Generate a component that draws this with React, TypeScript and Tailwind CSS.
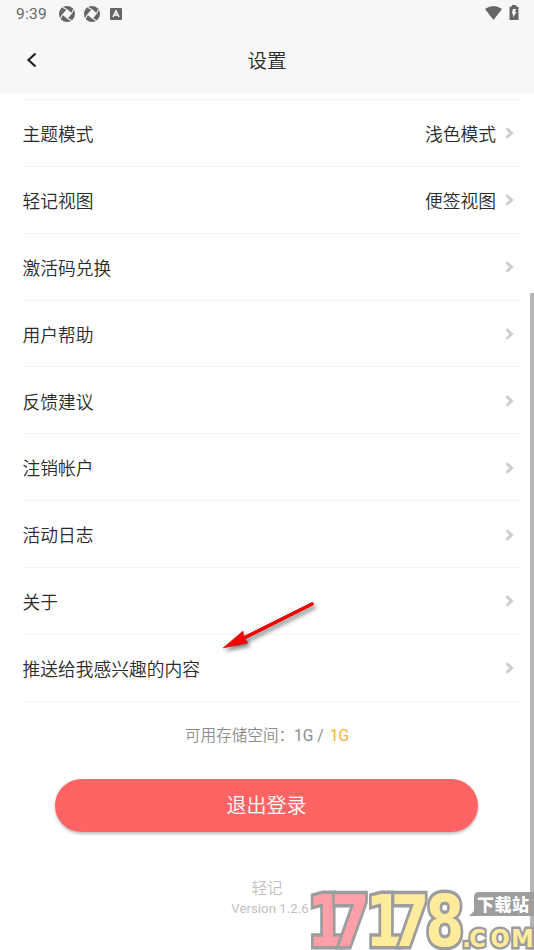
const rows = [
  { label: "主题模式", value: "浅色模式" },
  { label: "轻记视图", value: "便签视图" },
  { label: "激活码兑换" },
  { label: "用户帮助" },
  { label: "反馈建议" },
  { label: "注销帐户" },
  { label: "活动日志" },
  { label: "关于" },
  { label: "推送给我感兴趣的内容" },
];

function Shutter() {
  return (
    <svg width="16" height="16" viewBox="0 0 16 16">
      <circle cx="8" cy="8" r="8" fill="#666" />
      <path d="m8 3 5 4.500L8.500 13 3 8.500z" fill="#f7f7f7" />
      <path d="M8 3.500 4 1.500M12.500 7.500l2-4M8.500 12.500l4 2M3.500 8.500l-2 4" stroke="#f7f7f7" strokeWidth="1.100" />
    </svg>
  );
}

function StatusBar() {
  return (
    <div className="flex h-[27px] items-center pl-[16px] pr-[15px] text-[#666]">
      <span className="w-[43px] pt-[2px] text-[15.5px] leading-none tracking-[0.3px]">9:39</span>
      <div className="flex items-center gap-[9px]">
        <Shutter />
        <Shutter />
      </div>
      <svg className="ml-[10px]" width="12" height="12" viewBox="0 0 12 12">
        <rect width="12" height="12" rx="1" fill="#666" />
        <path d="m3 9 3-6 3 6M4.200 7h3.600" fill="none" stroke="#f7f7f7" strokeWidth="1.600" />
      </svg>
      <svg className="-mt-px ml-auto" width="17" height="14" viewBox="0 0 17 14">
        <path d="M0 3Q8.500-3 17 3L8.500 14z" fill="#666" />
      </svg>
      <svg className="-mt-[2px] ml-[7px]" width="10" height="15" viewBox="0 0 10 15">
        <path d="M3 0h4v1.500h1.500q1 0 1 1V15H.5V2.500q0-1 1-1H3z" fill="#666" />
        <path d="M4 4h3L6 7h1.500L4 12.500V8.500H2.800z" fill="#f7f7f7" />
      </svg>
    </div>
  );
}

function Watermark() {
  return (
    <svg className="absolute left-[306px] top-[884px]" width="228" height="66" viewBox="306 884 228 66">
      <g
        fontFamily="DejaVu Sans"
        fontWeight="700"
        stroke="#9d9d9d"
        strokeLinejoin="miter"
        strokeMiterlimit="3"
        paintOrder="stroke"
      >
        <text transform="scale(.78 1)" x="394 424.500 468.500 501 545.500" y="946" fontSize="71" strokeWidth="7" fill="#ffeb9c">
          <tspan fill="#ffa0a8">17</tspan>178
        </text>
        <text transform="scale(.9 1)" x="513.500 521.500 545 568" y="947" fontSize="25" strokeWidth="5" fill="#ffeb9c">
          .COM
        </text>
      </g>
      <path d="M479 892h55v24h-65l5-5v-14q0-5 5-5z" fill="#9d9d9d" />
      <text x="477" y="911" textLength="52" fontFamily="Noto Sans CJK SC" fontWeight="900" fontSize="17" fill="#fff">下载站</text>
    </svg>
  );
}

export default function App() {
  return (
    <div className="relative h-[950px] w-[534px] overflow-hidden bg-white font-['Roboto','Noto_Sans_CJK_SC',sans-serif] text-[#2b2b2b]">
      <header className="h-[93px] bg-[#f7f7f7]">
        <StatusBar />
        <div className="flex h-[66px] items-center px-[26px]">
          <svg width="11" height="16" viewBox="0 0 11 16" fill="none" stroke="#222" strokeWidth="2.200">
            <path d="M9.500 1.500 2.500 8l7 6.500" />
          </svg>
          <h1 className="flex-1 pr-[11px] pt-[3px] text-center text-[19.500px] font-[350] leading-none">设置</h1>
        </div>
      </header>

      <main>
        <ul className="ml-[22px] mt-[6px] w-[500px] border-t border-[#f5f5f5]">
          {rows.map((row) => (
            <li key={row.label} className="flex h-[66.860px] items-center border-b border-[#f5f5f5] pl-[0.5px] pr-[8px] text-[17.750px] font-[350]">
              <span className="pt-[5px]">{row.label}</span>
              <span className="ml-auto mr-[9px] pt-[5px]">{row.value}</span>
              <svg className="mt-px" width="9" height="12" viewBox="0 0 9 12" fill="none" stroke="#ccc" strokeWidth="2.800">
                <path d="M1.500 1.300 6.500 6l-5 4.700" />
              </svg>
            </li>
          ))}
        </ul>

        <p className="mt-[22px] text-center text-[15.600px] leading-[24px] text-[#8c8c8c]">
          <span className="font-[350]">可用存储空间：</span>1G / <span className="ml-[2px] text-[#ffaf2e]">1G</span>
        </p>
        <button className="ml-[55px] mt-[31.500px] block h-[53px] w-[423px] rounded-full bg-[#ff6464] text-[20px] font-[350] text-white shadow-[0_2px_3px_rgba(0,0,0,0.250)]">
          退出登录
        </button>
        <div className="mt-[47px] text-center text-[#c0c0c0]">
          <p className="text-[15.500px] font-[350] leading-[20px]">轻记</p>
          <p className="pl-[6px] text-[13.300px] leading-[20px]">Version 1.2.6</p>
        </div>
      </main>

      <div className="absolute right-0 top-[293px] h-[657px] w-[4px] bg-[#b5b5b5]" />

      <svg
        className="absolute left-[215px] top-[595px] drop-shadow-[2px_3px_2px_rgba(0,0,0,0.500)]"
        width="106"
        height="62"
        viewBox="215 595 106 62"
      >
        <path d="M312 604 242 639" stroke="#a01010" strokeWidth="3.600" strokeLinecap="round" />
        <path d="m223 648 20-17 1 7 4 5z" fill="#f00" stroke="#a01010" strokeWidth="0.500" />
        <path d="M312 604 242 639" stroke="#f00" strokeWidth="3" strokeLinecap="round" />
      </svg>

      <Watermark />
    </div>
  );
}
